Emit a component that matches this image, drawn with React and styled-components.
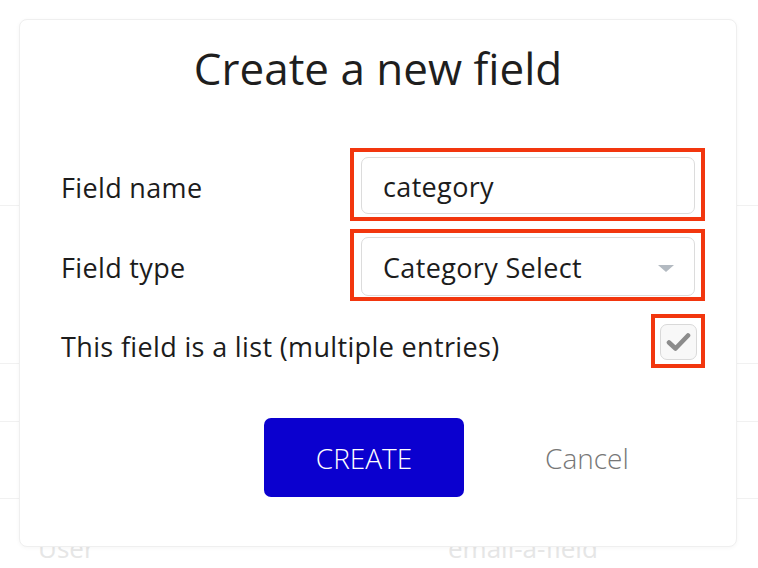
import React, { useState } from "react";
import styled, { createGlobalStyle } from "styled-components";

const GlobalStyle = createGlobalStyle`
  html, body {
    margin: 0;
    padding: 0;
    background: #ffffff;
    font-family: "Open Sans", "Noto Sans", sans-serif;
    color: #222;
  }
`;

const Page = styled.div`
  position: relative;
  width: 758px;
  height: 568px;
  overflow: hidden;
  background: #fff;
`;

const BackTable = styled.div`
  display: flex;
  flex-direction: column;
  padding-top: 205px;
`;

const BackRow = styled.div`
  height: ${(p) => p.$h}px;
  border-top: 1px solid #f1f1f1;
  display: grid;
  grid-template-columns: 410px 1fr;
  align-items: end;
  padding-left: 38px;
  color: #e6e6e6;
  font-size: 26px;
  box-sizing: border-box;
`;

const Modal = styled.div`
  position: absolute;
  top: 19px;
  left: 19px;
  width: 718px;
  height: 528px;
  box-sizing: border-box;
  background: #fff;
  border: 1px solid #efefef;
  border-radius: 8px;
  box-shadow: 0 1px 4px rgba(0, 0, 0, 0.04);
  display: flex;
  flex-direction: column;
`;

const Title = styled.h1`
  margin: 18px 0 0;
  height: 60px;
  line-height: 60px;
  text-align: center;
  font-size: 44px;
  font-weight: 400;
  color: #1e1e1e;
  letter-spacing: 0;
`;

const Form = styled.div`
  margin-top: 50px;
  display: flex;
  flex-direction: column;
`;

const Row = styled.div`
  display: flex;
  align-items: center;
  justify-content: space-between;
  padding: 0 31px 0 41px;
  margin-top: ${(p) => p.$top || 0}px;
`;

const Label = styled.span`
  font-size: 27px;
  letter-spacing: 0.35px;
  color: #1c1c1c;
  padding-top: ${(p) => p.$nudge || 0}px;
`;

const Highlight = styled.div`
  border: 4px solid #f2360e;
  padding: ${(p) => p.$pad || "5px 6px"};
  box-sizing: border-box;
  width: ${(p) => p.$w}px;
  height: ${(p) => p.$h}px;
  display: flex;
`;

const Input = styled.input`
  flex: 1;
  min-width: 0;
  box-sizing: border-box;
  border: 1px solid #dcdcdc;
  border-radius: 7px;
  padding: 1px 0 0 21px;
  font-family: "Open Sans", "Noto Sans", sans-serif;
  font-size: 27px;
  letter-spacing: 0.35px;
  color: #1c1c1c;
  background: #fff;
  outline: none;
`;

const Select = styled.div`
  flex: 1;
  box-sizing: border-box;
  border: 1px solid #dcdcdc;
  border-radius: 7px;
  padding: 2px 20px 0 21px;
  display: flex;
  align-items: center;
  justify-content: space-between;
  font-size: 27px;
  letter-spacing: 0.35px;
  color: #1c1c1c;
`;

const Caret = styled.span`
  width: 0;
  height: 0;
  border-left: 8px solid transparent;
  border-right: 8px solid transparent;
  border-top: 7px solid #b3bac1;
  margin-top: 2px;
`;

const CheckBox = styled.button`
  flex: 1;
  box-sizing: border-box;
  border: 1px solid #d9d9d9;
  border-radius: 7px;
  background: #f8f8f8;
  padding: 0;
  display: flex;
  align-items: center;
  justify-content: center;
  cursor: pointer;
`;

const Actions = styled.div`
  margin-top: 50px;
  margin-left: 244px;
  display: flex;
  align-items: center;
  gap: 81px;
`;

const PrimaryButton = styled.button`
  width: 200px;
  height: 79px;
  border: none;
  border-radius: 7px;
  background: #0b00cf;
  color: #fff;
  font-family: "Open Sans", "Noto Sans", sans-serif;
  font-size: 28px;
  font-weight: 300;
  cursor: pointer;
`;

const TextButton = styled.button`
  border: none;
  background: none;
  padding: 0;
  color: #777;
  font-family: "Open Sans", "Noto Sans", sans-serif;
  font-size: 28px;
  font-weight: 300;
  cursor: pointer;
`;

const App = () => {
  const [name, setName] = useState("category");
  const [isList, setIsList] = useState(true);

  return (
    <Page>
      <GlobalStyle />
      <BackTable>
        <BackRow $h={158} />
        <BackRow $h={58} />
        <BackRow $h={77} />
        <BackRow $h={68}>
          <span>User</span>
          <span>email-a-field</span>
        </BackRow>
      </BackTable>

      <Modal>
        <Title>Create a new field</Title>
        <Form>
          <Row>
            <Label $nudge={5}>Field name</Label>
            <Highlight $w={355} $h={73} $pad="5px 6px 3px 7px">
              <Input value={name} onChange={(e) => setName(e.target.value)} />
            </Highlight>
          </Row>
          <Row $top={8}>
            <Label $nudge={5}>Field type</Label>
            <Highlight $w={355} $h={72} $pad="4px 6px 1px 7px">
              <Select>
                <span>Category Select</span>
                <Caret />
              </Select>
            </Highlight>
          </Row>
          <Row $top={13}>
            <Label $nudge={11}>This field is a list (multiple entries)</Label>
            <Highlight $w={54} $h={54} $pad="6px 4px 4px 5px">
              <CheckBox onClick={() => setIsList(!isList)}>
                {isList && (
                  <svg width="25" height="20" viewBox="0 0 25 20">
                    <path
                      d="M3 10.5 L9.5 16.5 L22 3.5"
                      fill="none"
                      stroke="#8c8c8c"
                      strokeWidth="4.6"
                      strokeLinecap="round"
                      strokeLinejoin="round"
                    />
                  </svg>
                )}
              </CheckBox>
            </Highlight>
          </Row>
        </Form>
        <Actions>
          <PrimaryButton>CREATE</PrimaryButton>
          <TextButton>Cancel</TextButton>
        </Actions>
      </Modal>
    </Page>
  );
};

export default App;
